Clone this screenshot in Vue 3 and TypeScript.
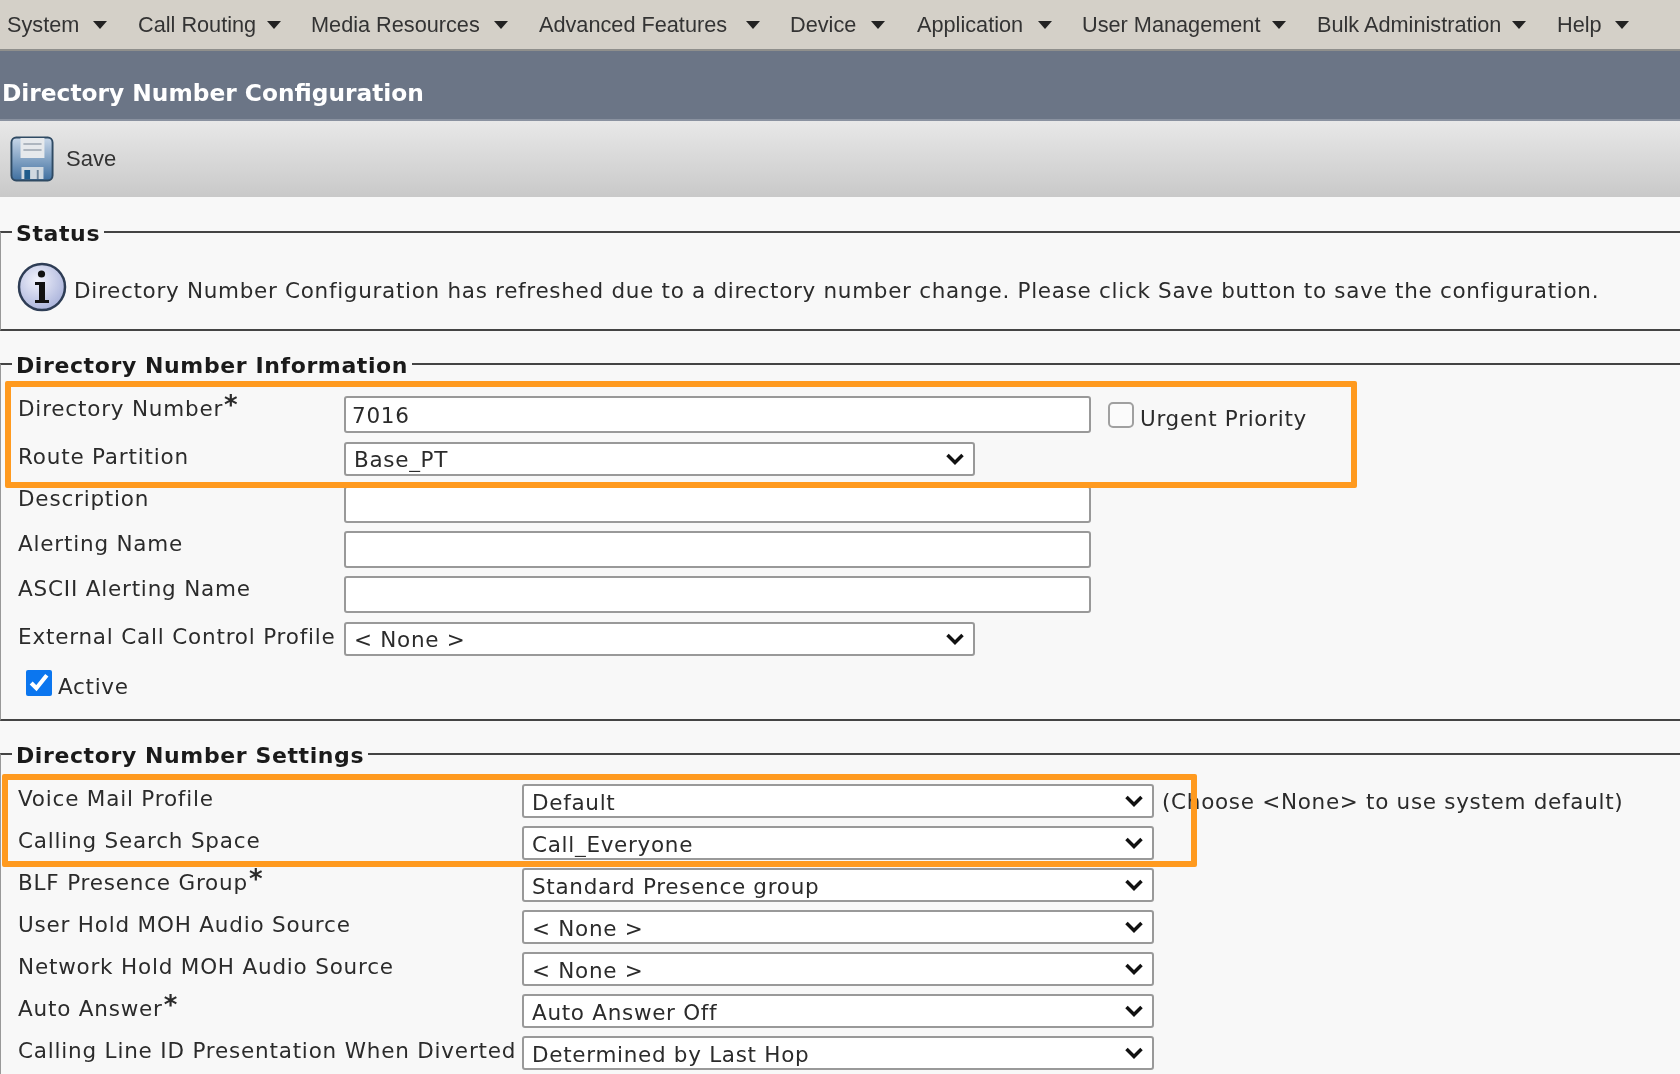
<template>
  <div class="page">
    <nav class="menu">
      <div v-for="item in menu" :key="item.label" class="menu__item" :style="{ width: item.width + 'px', gap: item.gap + 'px' }">
        <span>{{ item.label }}</span>
        <i class="menu__caret"></i>
      </div>
    </nav>

    <h1 class="title">Directory Number Configuration</h1>

    <div class="toolbar">
      <svg class="save-icon" width="44" height="46" viewBox="0 0 46 46" preserveAspectRatio="none">
        <defs>
          <linearGradient id="disk" x1="0" y1="0" x2="0" y2="1">
            <stop offset="0" stop-color="#c9d8ea" />
            <stop offset="1" stop-color="#3f6f9f" />
          </linearGradient>
        </defs>
        <rect x="1.5" y="1.5" width="43" height="43" rx="5" fill="url(#disk)" stroke="#2f4a63" stroke-width="2" />
        <path d="M11 2h25v20H11z" fill="#e6e9ec" />
        <path d="M14 8h19M14 14h19" stroke="#aeb6bf" stroke-width="2" />
        <path d="M12 43V31h23v12z" fill="#cfd8e0" />
        <rect x="15" y="34" width="6" height="9" fill="#1f5c8c" />
        <rect x="28" y="34" width="2" height="9" fill="#6d8499" />
      </svg>
      <span>Save</span>
    </div>

    <fieldset class="group group--status">
      <legend>Status</legend>
      <div class="status">
        <svg class="info-icon" width="50" height="50" viewBox="0 0 50 50">
          <defs>
            <radialGradient id="orb" cx="0.4" cy="0.35" r="0.75">
              <stop offset="0" stop-color="#f1f2fb" />
              <stop offset="1" stop-color="#a3add8" />
            </radialGradient>
          </defs>
          <circle cx="25" cy="25" r="23" fill="url(#orb)" stroke="#2e3d55" stroke-width="2.5" />
          <circle cx="24.500" cy="12" r="3.600" fill="#111" />
          <path d="M18 20h10v18h4v3H18v-3h4V23h-4z" fill="#111" />
        </svg>
        <span class="status__text">Directory Number Configuration has refreshed due to a directory number change. Please click Save button to save the configuration.</span>
      </div>
    </fieldset>

    <fieldset class="group group--info">
      <legend>Directory Number Information</legend>
      <div class="mark mark--info"></div>
      <div v-for="row in infoRows" :key="row.label" class="row row--info" :class="[row.cls, `row--${row.type}`]">
        <label>{{ row.label }}<sup v-if="row.required">*</sup></label>
        <input v-if="row.type === 'input'" class="field field--input" type="text" :value="row.value" />
        <div v-else class="select select--short">
          <select class="field"><option>{{ row.value }}</option></select>
          <svg class="chevron" width="20" height="12" viewBox="0 0 20 12"><path d="M2.500 2l7.500 7.500L17.500 2" /></svg>
        </div>
        <div v-if="row.urgent" class="urgent">
          <input type="checkbox" />
          <span>Urgent Priority</span>
        </div>
      </div>
      <div class="active">
        <input type="checkbox" checked />
        <span>Active</span>
      </div>
    </fieldset>

    <fieldset class="group group--settings">
      <legend>Directory Number Settings</legend>
      <div class="mark mark--settings"></div>
      <div v-for="row in settingRows" :key="row.label" class="row row--settings">
        <label>{{ row.label }}<sup v-if="row.required">*</sup></label>
        <div class="select select--wide">
          <select class="field"><option>{{ row.value }}</option></select>
          <svg class="chevron" width="20" height="12" viewBox="0 0 20 12"><path d="M2.500 2l7.500 7.500L17.500 2" /></svg>
        </div>
        <span v-if="row.hint" class="hint">{{ row.hint }}</span>
      </div>
    </fieldset>
  </div>
</template>

<script setup lang="ts">
interface InfoRow {
  label: string
  type: 'input' | 'select'
  value: string
  required?: boolean
  urgent?: boolean
  cls?: string
}

interface SettingRow {
  label: string
  value: string
  required?: boolean
  hint?: string
}

const menu = [
  { label: 'System', width: 131, gap: 14 },
  { label: 'Call Routing', width: 173, gap: 11 },
  { label: 'Media Resources', width: 228, gap: 14 },
  { label: 'Advanced Features', width: 251, gap: 19 },
  { label: 'Device', width: 127, gap: 15 },
  { label: 'Application', width: 165, gap: 15 },
  { label: 'User Management', width: 235, gap: 12 },
  { label: 'Bulk Administration', width: 240, gap: 11 },
  { label: 'Help', width: 100, gap: 13 }
]

const infoRows: InfoRow[] = [
  { label: 'Directory Number', type: 'input', value: '7016', required: true, urgent: true, cls: 'row--first' },
  { label: 'Route Partition', type: 'select', value: 'Base_PT' },
  { label: 'Description', type: 'input', value: '' },
  { label: 'Alerting Name', type: 'input', value: '' },
  { label: 'ASCII Alerting Name', type: 'input', value: '' },
  { label: 'External Call Control Profile', type: 'select', value: '< None >' }
]

const settingRows: SettingRow[] = [
  { label: 'Voice Mail Profile', value: 'Default', hint: '(Choose <None> to use system default)' },
  { label: 'Calling Search Space', value: 'Call_Everyone' },
  { label: 'BLF Presence Group', value: 'Standard Presence group', required: true },
  { label: 'User Hold MOH Audio Source', value: '< None >' },
  { label: 'Network Hold MOH Audio Source', value: '< None >' },
  { label: 'Auto Answer', value: 'Auto Answer Off', required: true },
  { label: 'Calling Line ID Presentation When Diverted', value: 'Determined by Last Hop' }
]
</script>

<style>
html,
body {
  overflow: hidden;
  background: #f8f8f8;
}
</style>

<style scoped>
.page {
  width: 1680px;
  height: 1074px;
  overflow: hidden;
  background: #f8f8f8;
  color: #2b2b2b;
  font-family: "DejaVu Sans", Verdana, sans-serif;
  font-size: 21.5px;
  letter-spacing: 0.7px;
  filter: blur(0.5px);
}

.menu {
  display: flex;
  height: 51px;
  padding-left: 7px;
  box-sizing: border-box;
  background: #d4d0c8;
  border-bottom: 2px solid #8f8f8c;
  font-family: "Liberation Sans", Arial, sans-serif;
  font-size: 21.7px;
  letter-spacing: 0;
  color: #333;
}

.menu__item {
  display: flex;
  align-items: center;
  flex: none;
}

.menu__caret {
  width: 0;
  height: 0;
  border-left: 7.5px solid transparent;
  border-right: 7.5px solid transparent;
  border-top: 8px solid #222;
}

.title {
  margin: 0;
  height: 70px;
  padding: 14px 0 0 2px;
  display: flex;
  align-items: center;
  box-sizing: border-box;
  background: #6b7586;
  border-bottom: 2px solid #8a92a0;
  color: #fff;
  font-size: 23.3px;
  letter-spacing: 0;
  font-weight: bold;
}

.toolbar {
  display: flex;
  align-items: center;
  gap: 12px;
  height: 76px;
  padding-left: 10px;
  box-sizing: border-box;
  background: linear-gradient(#e8e8e8, #c9c9c9);
  font-family: "Liberation Sans", Arial, sans-serif;
  font-size: 22px;
  letter-spacing: 0;
  color: #333;
}

.group {
  position: relative;
  margin: 0 -10px 0 0;
  padding: 0;
  border: 0 solid #444;
  border-width: 2px 0 2px 1px;
  border-left-color: #999;
  min-width: 0;
}

.group legend {
  margin-left: 11px;
  padding: 4px 4px 0;
  line-height: 26px;
  font-size: 22px;
  letter-spacing: 0.6px;
  font-weight: bold;
  color: #1a1a1a;
}

.group--status {
  margin-top: 20px;
  height: 114px;
  box-sizing: border-box;
}

.group--info {
  margin-top: 18px;
  height: 372px;
  box-sizing: border-box;
}

.group--settings {
  margin-top: 18px;
  padding-top: 11px;
}

.status {
  display: flex;
  align-items: center;
  gap: 7px;
  padding: 15px 0 0 16px;
  white-space: nowrap;
}

.status__text {
  margin-top: 6px;
}

.row {
  display: flex;
  white-space: nowrap;
}

.row label {
  flex: none;
  padding-left: 17px;
  box-sizing: border-box;
  letter-spacing: 0.8px;
}

.row sup {
  margin-left: 1px;
  font-size: 26px;
  font-weight: 600;
  line-height: 0;
  vertical-align: 2px;
}

.row--info {
  height: 45px;
  align-items: center;
}

.row--info label {
  width: 343px;
  margin-top: -12px;
}

.row--info.row--select label {
  margin-top: -7px;
}

.row--select .select {
  margin-top: -2px;
}

.row--first {
  margin-top: 13px;
}

.row--settings {
  height: 42px;
  align-items: center;
}

.row--settings label {
  width: 521px;
  margin-top: -5px;
}

.field {
  display: block;
  width: 100%;
  height: 34px;
  padding: 2px 8px 0;
  box-sizing: border-box;
  background: #fff;
  border: 2px solid #999;
  border-radius: 3px;
  color: #2b2b2b;
  font: inherit;
  letter-spacing: inherit;
  appearance: none;
  outline: none;
}

.field--input {
  flex: none;
  width: 747px;
  height: 37px;
  padding-left: 6px;
}

.select {
  position: relative;
  flex: none;
}

.select--short {
  width: 631px;
}

.select--wide {
  width: 632px;
}

.chevron {
  position: absolute;
  right: 10px;
  top: 11px;
  fill: none;
  stroke: #111;
  stroke-width: 3.500;
}

.urgent {
  display: flex;
  align-items: center;
  gap: 6px;
  margin-left: 17px;
}

.urgent input {
  margin: 0;
  width: 26px;
  height: 26px;
  flex: none;
  box-sizing: border-box;
  appearance: none;
  background: #fbfbfb;
  border: 2px solid #a0a0a0;
  border-radius: 5px;
}

.urgent span {
  margin-top: 8px;
}

.active {
  display: flex;
  align-items: center;
  gap: 6px;
  margin: 4px 0 0 25px;
}

.active input {
  margin: 0;
  width: 26px;
  height: 26px;
  accent-color: #0b76ef;
}

.active span {
  margin-top: 8px;
}

.mark {
  position: absolute;
  box-sizing: border-box;
  border: 6px solid #ff9a1f;
  border-radius: 2px;
  pointer-events: none;
}

.mark--info {
  left: 4px;
  top: 2px;
  width: 1352px;
  height: 107px;
}

.mark--settings {
  left: 1px;
  top: 5px;
  width: 1195px;
  height: 93px;
}

.hint {
  margin-left: 8px;
}
</style>
